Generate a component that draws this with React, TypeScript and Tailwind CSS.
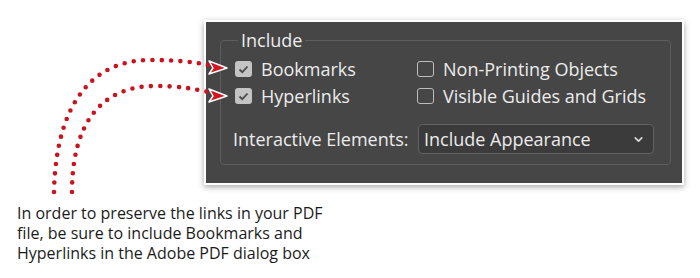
import { ChevronDown } from "lucide-react";

const font = { fontFamily: '"Open Sans", "Noto Sans", sans-serif' };

const Box: React.FC<{ checked?: boolean }> = ({ checked }) =>
  checked ? (
    <span className="flex h-[16px] w-[17px] items-center justify-center rounded-[3px] bg-[#c4c4c4]">
      <svg width="11" height="9" viewBox="0 0 11 9">
        <path d="M1.5 4.5 L4.3 7.2 L9.5 1.5" fill="none" stroke="#4a4a4a" strokeWidth="1.8" />
      </svg>
    </span>
  ) : (
    <span className="h-[16px] w-[17px] rounded-[3px] border-[1.5px] border-[#bdbdbd]" />
  );

const Check: React.FC<{ label: string; checked?: boolean }> = ({ label, checked }) => (
  <label className="flex items-center gap-[9px]">
    <Box checked={checked} />
    <span>{label}</span>
  </label>
);

const Arrows: React.FC = () => (
  <svg className="pointer-events-none absolute left-0 top-0" width="700" height="278" viewBox="0 0 700 278">
    <g fill="none" stroke="#c8141f" strokeWidth="4.6" strokeLinecap="round" strokeDasharray="0 9.3">
      <path d="M54 192 C56 100 95 60 150 60 C175 60 195 62 208 65" />
      <path d="M72 192 C72 125 100 86 155 86 C180 86 195 89 208 92" />
    </g>
    <g fill="#d4141f" stroke="#fff" strokeWidth="1.5" strokeLinejoin="round">
      <polygon points="209,61 227,68 209,74 213,68" />
      <polygon points="209,89 227,96 209,102 213,96" />
    </g>
  </svg>
);

const App: React.FC = () => {
  return (
    <div className="relative h-[278px] w-[700px] overflow-hidden bg-white" style={font}>
      <div className="ml-[204px] mt-[20px] h-[165px] w-[480px] border-2 border-white bg-[#464646] pl-[14px] pt-[7px] shadow-[0_2px_6px_rgba(0,0,0,0.35)]">
        <fieldset className="h-[136px] w-[451px] rounded-[4px] border border-[#5e5e5e] text-[18px] font-medium leading-[22px] text-[#ececec]">
          <legend className="ml-[17px] px-[3px]">Include</legend>
          <div className="grid grid-cols-[182px_1fr] gap-y-[5px] pl-[14px] pt-[7px]">
            <Check label="Bookmarks" checked />
            <Check label="Non-Printing Objects" />
            <Check label="Hyperlinks" checked />
            <Check label="Visible Guides and Grids" />
          </div>
          <div className="mt-[17px] flex items-center pl-[12px]">
            <span className="w-[185px]">Interactive Elements:</span>
            <div className="flex h-[30px] w-[236px] items-center justify-between rounded-[4px] border border-[#636363] bg-[#3b3b3b] pl-[5px] pr-[8px]">
              <span>Include Appearance</span>
              <ChevronDown size={13} strokeWidth={3} className="text-[#dcdcdc]" />
            </div>
          </div>
        </fieldset>
      </div>
      <p className="ml-[17px] mt-[18px] text-[16px] leading-[20px] text-[#1b1b1b]">
        In order to preserve the links in your PDF
        <br />
        file, be sure to include Bookmarks and
        <br />
        Hyperlinks in the Adobe PDF dialog box
      </p>
      <Arrows />
    </div>
  );
};

export default App;
